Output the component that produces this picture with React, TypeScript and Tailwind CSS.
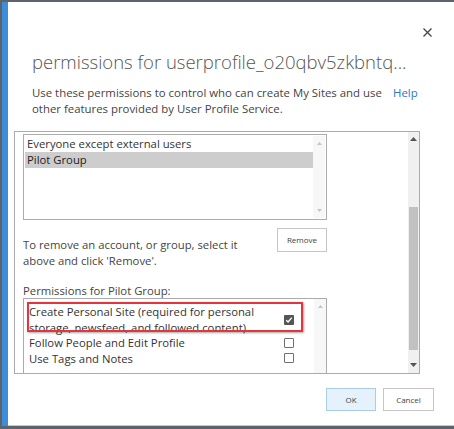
import React from "react";

const font = { fontFamily: '"Segoe UI", "Open Sans", sans-serif' };

function Check({ checked }: { checked?: boolean }) {
  if (checked) {
    return (
      <span className="w-[10px] h-[10px] rounded-[1px] bg-[#555] flex items-center justify-center">
        <svg width="8" height="8" viewBox="0 0 8 8">
          <path d="M1.2 4.2 L3.1 6 L6.8 1.6" fill="none" stroke="#fff" strokeWidth="1.4" />
        </svg>
      </span>
    );
  }
  return <span className="w-[10px] h-[10px] rounded-[1px] border border-[#6f6f6f] bg-white" />;
}

export default function App() {
  return (
    <div className="w-[454px] h-[429px] bg-[#5d626b] pt-[2px] pl-[2px] pb-[3px] flex" style={font}>
      <div className="w-[6px] bg-[#3d8dd8]" />
      <div className="flex-1 bg-white border-b border-[#c9c9c9] flex flex-col">
        {/* header */}
        <div className="flex justify-end pr-[22px] pt-[26px] shrink-0">
          <svg width="9" height="9" viewBox="0 0 9 9">
            <path d="M0.5 0.5 L8.5 8.5 M8.5 0.5 L0.5 8.5" stroke="#444" strokeWidth="1.3" />
          </svg>
        </div>
        <h1 className="pl-[24px] mt-[10px] text-[18.5px] leading-[30px] font-light text-[#555] whitespace-nowrap">
          permissions for userprofile_o20qbv5zkbntq...
        </h1>
        <div className="pl-[24px] mt-[8px] flex text-[11.4px] leading-[16px] text-[#444] whitespace-nowrap">
          <p className="w-[361px]">
            Use these permissions to control who can create My Sites and use
            <br />
            other features provided by User Profile Service.
          </p>
          <span className="text-[#2a78c6]">Help</span>
        </div>

        {/* scrolled settings box */}
        <div className="ml-[6px] mt-[14px] w-[406px] h-[243px] border border-[#ababab] flex overflow-hidden shrink-0">
          <div className="flex-1 pl-[8px] pt-[2px] flex flex-col overflow-hidden">
            <div className="shrink-0 w-[304px] h-[86px] border border-[#ababab] flex p-[1px] text-[11.3px] leading-[16px] text-[#333]">
              <div className="flex-1">
                <div className="px-[2px] h-[16px]">Everyone except external users</div>
                <div className="px-[2px] h-[16px] bg-[#cdcdcd] text-[#222]">Pilot Group</div>
              </div>
              <div className="w-[12px] bg-[#f7f7f7] flex flex-col items-center justify-between py-[6px]">
                <svg width="5" height="3" viewBox="0 0 5 3">
                  <path d="M0 3 L2.5 0 L5 3 Z" fill="#c4c4c4" />
                </svg>
                <svg width="5" height="3" viewBox="0 0 5 3">
                  <path d="M0 0 L2.5 3 L5 0 Z" fill="#c4c4c4" />
                </svg>
              </div>
            </div>

            <div className="shrink-0 w-[304px] flex justify-between mt-[8px]">
              <p className="mt-[9px] text-[11.3px] leading-[16px] text-[#444] whitespace-nowrap">
                To remove an account, or group, select it
                <br />
                above and click 'Remove'.
              </p>
              <button className="w-[50px] h-[24px] border border-[#c6c6c6] bg-white text-[8px] text-[#444]">
                Remove
              </button>
            </div>

            <p className="shrink-0 mt-[15px] text-[11.3px] leading-[14px] text-[#444]">Permissions for Pilot Group:</p>

            <div className="shrink-0 w-[304px] h-[100px] border border-[#ababab] border-b-0 flex relative text-[11.3px] leading-[15.5px] text-[#333]">
              <div className="flex-1 pl-[5px] pr-[20px] pt-[5px]">
                <div className="flex items-center justify-between">
                  <span className="whitespace-nowrap">
                    Create Personal Site (required for personal
                    <br />
                    storage, newsfeed, and followed content)
                  </span>
                  <Check checked />
                </div>
                <div className="flex items-center justify-between">
                  <span>Follow People and Edit Profile</span>
                  <Check />
                </div>
                <div className="flex items-center justify-between">
                  <span>Use Tags and Notes</span>
                  <Check />
                </div>
              </div>
              <div className="w-[12px] bg-[#f7f7f7] flex flex-col items-center pt-[6px]">
                <svg width="5" height="3" viewBox="0 0 5 3">
                  <path d="M0 3 L2.5 0 L5 3 Z" fill="#c4c4c4" />
                </svg>
              </div>
              <div className="absolute left-[3px] top-[3px] w-[276px] h-[30px] border-2 border-[#e3353b] shadow-[1px_1px_2px_rgba(0,0,0,0.35)]" />
            </div>
          </div>
          <div className="w-[11px] bg-[#f0f0f0] flex flex-col items-center">
            <svg width="7" height="4" viewBox="0 0 7 4" className="mt-[5px]">
              <path d="M0 4 L3.5 0 L7 4 Z" fill="#555" />
            </svg>
            <div className="mt-[66px] w-[9px] h-[143px] bg-[#c1c1c1]" />
            <svg width="7" height="4" viewBox="0 0 7 4" className="mt-[13px]">
              <path d="M0 0 L3.5 4 L7 0 Z" fill="#555" />
            </svg>
          </div>
        </div>

        {/* buttons */}
        <div className="flex justify-end gap-[7px] pr-[20px] mt-[14px] shrink-0">
          <button className="w-[50px] h-[23px] border border-[#a9cce9] bg-[#e5f1fb] text-[8px] text-[#444]">
            OK
          </button>
          <button className="w-[51px] h-[23px] border border-[#c6c6c6] bg-white text-[8px] text-[#444]">
            Cancel
          </button>
        </div>
      </div>
    </div>
  );
}
